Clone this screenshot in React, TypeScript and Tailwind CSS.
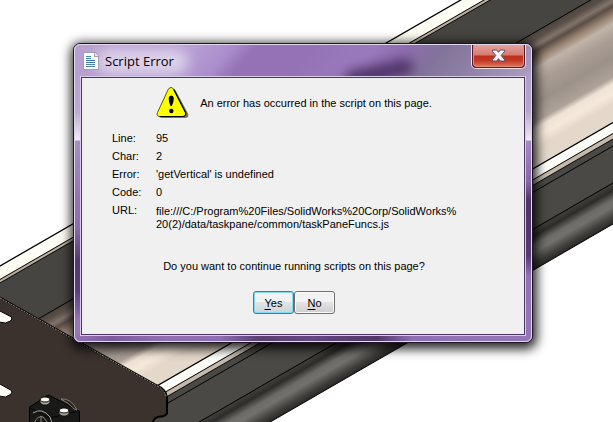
import { useState } from "react";

interface ErrorField {
  label: string;
  value: string[];
}

const FIELDS: ErrorField[] = [
  { label: "Line:", value: ["95"] },
  { label: "Char:", value: ["2"] },
  { label: "Error:", value: ["'getVertical' is undefined"] },
  { label: "Code:", value: ["0"] },
  {
    label: "URL:",
    value: [
      "file:///C:/Program%20Files/SolidWorks%20Corp/SolidWorks%",
      "20(2)/data/taskpane/common/taskPaneFuncs.js",
    ],
  },
];

export default function App() {
  const [open, setOpen] = useState(true);
  const close = () => setOpen(false);

  return (
    <main className="relative isolate min-h-screen overflow-hidden bg-white pt-[43px] pr-20 pb-[79px] pl-[73px]">
      <ModelBackdrop />
      {open && <ScriptErrorDialog onClose={close} />}
    </main>
  );
}

// ─── Dialog ──────────────────────────────────────────────────────────────────

function ScriptErrorDialog({ onClose }: { onClose: () => void }) {
  return (
    <section
      role="dialog"
      aria-labelledby="dialog-title"
      className="relative isolate max-w-[640px] rounded-[7px] border border-[#1d1526] bg-[#8f70ae] shadow-[1px_3px_11px_3px_rgba(0,0,0,0.85)]"
    >
      <GlassFrame />
      <div className="rounded-md border border-[#e2d8ee] px-[5px] pb-[5px]">
        <header className="flex h-[31px] items-center">
          <DocumentIcon />
          <h1
            id="dialog-title"
            className="ml-[6px] flex-1 font-['Open_Sans','Noto_Sans',sans-serif] text-[13px] leading-5 text-black"
          >
            Script Error
          </h1>
          <button
            type="button"
            aria-label="Close"
            onClick={onClose}
            className="grid h-6 w-[55px] place-items-center self-start rounded-b-[5px] border border-t-0 border-[#f1dfe4] bg-[#58182a] px-px pb-px"
          >
            <span className="grid h-full w-full place-items-center rounded-b-[4px] border border-t-0 border-[#e08d80] bg-linear-[180deg,#e3a39c_0%,#d67a70_48%,#bd2f1c_52%,#c43a26_75%,#dc6e58_100%]">
              <CloseGlyph />
            </span>
          </button>
        </header>

        <div className="border border-[#d9cce8]">
          <div className="border border-[#4c3566] bg-[#f0f0f0] pt-2 pb-5 font-['Liberation_Sans',Arial,sans-serif] text-[11px] leading-[18px] text-black">
            <div className="flex items-center justify-center gap-[11px] pr-[18px]">
              <WarningIcon />
              <p>An error has occurred in the script on this page.</p>
            </div>

            <dl className="mt-[10px] grid grid-cols-[44px_1fr] pl-[30px]">
              {FIELDS.map((f) => (
                <FieldRow key={f.label} field={f} />
              ))}
            </dl>

            <p className="mt-[26px] pr-[18px] text-center">
              Do you want to continue running scripts on this page?
            </p>

            <div className="mt-4 flex justify-center pr-[18px]">
              <button
                type="button"
                onClick={onClose}
                className="h-[23px] w-[41px] rounded-[3px] border border-[#3c7f9c] bg-linear-to-b from-[#f2f2f2] from-50% via-[#e2e5e7] via-50% to-[#cfd3d6] leading-5 shadow-[inset_0_0_0_1px_#7fdcf2]"
              >
                <u className="underline-offset-2">Y</u>es
              </button>
              <button
                type="button"
                onClick={onClose}
                className="h-[23px] w-[41px] rounded-[3px] border border-[#707070] bg-linear-to-b from-[#f2f2f2] from-50% via-[#e3e3e3] via-50% to-[#cfcfcf] leading-5 shadow-[inset_0_0_0_1px_#fafafa]"
              >
                <u className="underline-offset-2">N</u>o
              </button>
            </div>
          </div>
        </div>
      </div>
    </section>
  );
}

function FieldRow({ field }: { field: ErrorField }) {
  const multiline = field.value.length > 1;

  return (
    <>
      <dt>{field.label}</dt>
      <dd className={multiline ? "pt-1 leading-[13px]" : undefined}>
        {field.value.map((line) => (
          <span key={line} className="block">
            {line}
          </span>
        ))}
      </dd>
    </>
  );
}

/** Tinted glass behind the dialog content: title bar, both sides and bottom. */
function GlassFrame() {
  return (
    <div
      aria-hidden
      className="absolute inset-0 -z-10 overflow-hidden rounded-md"
    >
      <span className="absolute inset-x-0 top-0 h-[33px] bg-linear-[130deg,#b7a0cf_0%,#b79fd3_25%,#ab8dcc_33%,#9472b5_38%,#9472b5_50%,#9a79bd_62%,#8d6dae_69%,#82739a_77%,#8f82a6_86%,#ad9fc4_100%]" />
      <span className="absolute top-[21px] right-[118px] h-4 w-[70px] -rotate-12 rounded-full bg-[#43285c]/85 blur-[6px]" />
      <span className="absolute top-[5px] left-[22px] h-[25px] w-[92px] rounded-full bg-white/55 blur-[7px]" />
      <span className="absolute top-8 bottom-0 left-0 w-2 bg-linear-[180deg,#b7a2cf_0px,#bbaad2_35px,#f0eaf5_64px,#a78fc2_65px,#9475b4_120px,#8d6eae_150px,#54386f_185px,#5b3e77_215px,#9677b6_245px,#9475b4_100%]" />
      <span className="absolute top-8 right-0 bottom-0 w-2 bg-linear-[180deg,#aea0c4_0px,#b6a7ca_35px,#f0eaf5_64px,#a48bc0_65px,#8768a8_105px,#4e3566_125px,#573b72_180px,#9172b2_200px,#9677b6_100%]" />
      <span className="absolute inset-x-0 bottom-0 h-2 bg-linear-[90deg,#9475b4_0%,#7d5c9e_8%,#9070b0_20%,#8e6eae_32%,#5a4073_40%,#634880_52%,#51376a_66%,#8f70b0_74%,#9677b6_100%]" />
    </div>
  );
}

// ─── Icons ───────────────────────────────────────────────────────────────────

function DocumentIcon() {
  return (
    <svg
      aria-hidden
      className="ml-[3px] h-[18px] w-4"
      viewBox="0 0 16 18"
      shapeRendering="crispEdges"
    >
      <path d="M0 0h12l4 4v14H0z" fill="#a39fae" />
      <path d="M1 1h10v4h4v12H1z" fill="#fbfcfd" />
      <path d="M12 1v3h3z" fill="#e6eaee" />
      <path d="M3 4.500h5M3 6.500h5" stroke="#3f88a8" />
      <path d="M3 8.500h9M3 10.500h9" stroke="#3a72ac" />
      <path d="M3 12.500h9M3 14.500h9" stroke="#4f86b4" />
    </svg>
  );
}

function WarningIcon() {
  return (
    <svg aria-hidden className="h-[33px] w-[33px]" viewBox="0 0 33 33">
      <path
        d="M17 3q2 0 3 2l12 22.500q1.500 4.500-2.500 4.500H6q-3-.5-3-3z"
        fill="#77776e"
      />
      <path
        d="M15 1.500q1.800 0 2.800 2L29.500 26.500q1 3.500-2.500 4H3.500Q0 30 1.500 26.500L12.200 3.500q1-2 2.800-2z"
        fill="#ffff00"
        stroke="#5a5a00"
      />
      <path
        d="M3.500 30.500H27q3.500-.5 2.500-4L17.800 3.500"
        fill="none"
        stroke="#000"
        strokeWidth="1.200"
      />
      <path
        d="M12.700 12q.3-2.500 2.500-2.500t2.600 2.500q.2 3.500-2 8h-1.200q-2.200-4.500-1.900-8z"
        fill="#000"
      />
      <circle cx="15.300" cy="25" r="2.200" fill="#000" />
    </svg>
  );
}

function CloseGlyph() {
  return (
    <svg aria-hidden className="h-[13px] w-[15px]" viewBox="0 0 15 13">
      <path
        d="M1.500 1h4.300l1.700 2.300L9.200 1h4.300v1.500L10.200 6.500l3.300 4V12H9.200L7.500 9.700 5.800 12H1.500v-1.500l3.300-4-3.300-4z"
        fill="#f6f4f6"
        stroke="#5b4f60"
      />
    </svg>
  );
}

// ─── Backdrop ────────────────────────────────────────────────────────────────

/**
 * CAD model behind the dialog. The rails all run at 30°, so they are drawn as
 * flat bands inside a skewed group.
 */
function ModelBackdrop() {
  return (
    <svg
      aria-hidden
      className="absolute inset-0 -z-10 h-full w-full"
      viewBox="0 0 613 422"
      preserveAspectRatio="xMidYMid slice"
    >
      <defs>
        <linearGradient id="channel" x1="0" y1="0" x2="0" y2="1">
          <stop offset="0" stopColor="#4a443e" />
          <stop offset=".05" stopColor="#5b5048" />
          <stop offset=".1" stopColor="#80736a" />
          <stop offset=".14" stopColor="#5a4f47" />
          <stop offset=".2" stopColor="#95806d" />
          <stop offset=".27" stopColor="#c0b3a8" />
          <stop offset=".38" stopColor="#a99d94" />
          <stop offset=".52" stopColor="#9c9189" />
          <stop offset=".66" stopColor="#ada198" />
          <stop offset=".71" stopColor="#eee2d4" />
          <stop offset=".78" stopColor="#f5e9db" />
          <stop offset=".86" stopColor="#e5d8ca" />
          <stop offset="1" stopColor="#e4d8ca" />
        </linearGradient>
        <linearGradient id="tube" x1="0" y1="0" x2="0" y2="1">
          <stop offset="0" stopColor="#45433f" />
          <stop offset=".2" stopColor="#2e2c2a" />
          <stop offset=".42" stopColor="#6d6b67" />
          <stop offset=".58" stopColor="#73716d" />
          <stop offset=".85" stopColor="#3f3d3a" />
          <stop offset="1" stopColor="#2b2927" />
        </linearGradient>
      </defs>

      <g transform="skewY(-30)">
        <rect x="-10" y="266" width="660" height="14" fill="#fdfdf3" />
        <rect x="-10" y="279" width="660" height="4" fill="#b9aea2" />
        <rect x="-10" y="283" width="660" height="59" fill="#474541" />
        <rect x="-10" y="341" width="660" height="136" fill="url(#channel)" />
        <rect x="-10" y="476" width="660" height="12" fill="#fefefa" />
        <rect x="-10" y="487" width="660" height="6" fill="#c4b9ac" />
        <rect x="-10" y="493" width="660" height="44" fill="#4b4945" />
        <rect x="-10" y="536" width="660" height="42" fill="url(#tube)" />
        <g stroke="#000">
          <path d="M-10 266h660M-10 476.500h660" strokeWidth="1.500" />
          <path d="M-10 279.500h660M-10 283h660M-10 341h660M-10 487.500h660M-10 493h660M-10 500h660M-10 537h660M-10 578h660" />
        </g>
      </g>

      {/* mounting plate */}
      <path
        d="M0 298l157 88q9 4 10 12v16q-2 2-6 2-7 0-8 6H0z"
        fill="#3b322e"
      />
      <path
        d="M0 297.500l157 88q9 4 10 12v16q-2 3-6 3-7 0-8 6"
        fill="none"
        stroke="#000"
        strokeWidth="2"
      />
      <path
        d="M0 298l157 88q8 4 9 11"
        fill="none"
        stroke="#a39a8d"
        strokeWidth="1"
        strokeDasharray="2 1"
      />
      <path
        d="M-1 310.500l12.500 6.500q1 2-1 4l-5 2-6.500-1zM-1 383.500l12.500 7q1 2-1 4l-5 2.500-6.500-1z"
        fill="#fdfdf3"
        stroke="#000"
      />

      {/* bolted block */}
      <path d="M29.500 407l19-12 31 16v12h-50z" fill="#191918" stroke="#000" />
      <path d="M61 399q10-1 16 11l-3-1q-5-6-13-10z" fill="#25231f" stroke="#a39e93" strokeWidth=".7" />
      <path d="M30 408l20 10 29-7M50 418v5" fill="none" stroke="#050505" />
      <path
        d="M33 413q9-6 17 4l2 6"
        fill="none"
        stroke="#aaa59a"
      />
      <path d="M34 423q4-8 9-6l5 6M41 416v7" fill="none" stroke="#8b867d" />
      <g stroke="#111">
        <path d="M40 399l3-2h4l3 2v4l-3 2h-4l-3-2z" fill="#a8a49a" />
        <ellipse cx="45" cy="399.500" rx="4.500" ry="2.500" fill="#fcfcf4" />
        <path d="M59 410l3-2h4l3 2v4l-3 2h-4l-3-2z" fill="#a8a49a" />
        <ellipse cx="64" cy="410.500" rx="4.500" ry="2.500" fill="#fcfcf4" />
      </g>
    </svg>
  );
}
